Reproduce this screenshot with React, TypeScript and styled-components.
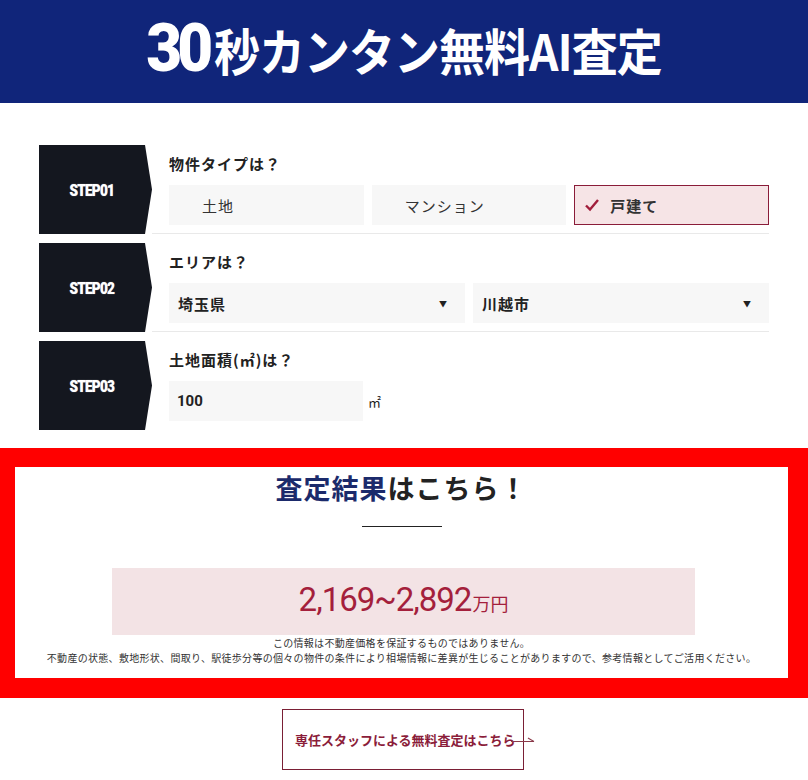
import styled, { createGlobalStyle } from 'styled-components';

const JP = `"Noto Sans CJK JP", "Noto Sans", sans-serif`;

const GlobalStyle = createGlobalStyle`
  body {
    margin: 0;
    background: #fff;
    font-family: ${JP};
    color: #222;
  }
`;

const propertyTypes = ['土地', 'マンション', '戸建て'];

const App = () => (
  <>
    <GlobalStyle />
    <Header>
      <Title>
        <Big>30</Big>秒カンタン無料AI査定
      </Title>
    </Header>

    <Steps>
      <StepRow>
        <StepBadge><StepText>STEP01</StepText></StepBadge>
        <StepBody $divider>
          <Question>物件タイプは？</Question>
          <Choices $cols={3}>
            {propertyTypes.map((t) => (
              <Choice key={t} $active={t === '戸建て'}>
                {t === '戸建て' && <Check />}
                {t}
              </Choice>
            ))}
          </Choices>
        </StepBody>
      </StepRow>

      <StepRow>
        <StepBadge><StepText>STEP02</StepText></StepBadge>
        <StepBody $divider>
          <Question>エリアは？</Question>
          <Choices $cols={2}>
            <Select>埼玉県<Caret>▼</Caret></Select>
            <Select>川越市<Caret>▼</Caret></Select>
          </Choices>
        </StepBody>
      </StepRow>

      <StepRow>
        <StepBadge><StepText>STEP03</StepText></StepBadge>
        <StepBody>
          <Question>土地面積(㎡)は？</Question>
          <InputRow>
            <AreaInput>100</AreaInput>
            <Unit>㎡</Unit>
          </InputRow>
        </StepBody>
      </StepRow>
    </Steps>

    <Result>
      <ResultTitle>
        <Accent>査定結果</Accent>はこちら！
      </ResultTitle>
      <Rule />
      <PriceBox>
        <Price>2,169~2,892</Price>
        <Yen>万円</Yen>
      </PriceBox>
      <Notes>
        この情報は不動産価格を保証するものではありません。
        <br />
        不動産の状態、敷地形状、間取り、駅徒歩分等の個々の物件の条件により相場情報に差異が生じることがありますので、参考情報としてご活用ください。
      </Notes>
    </Result>

    <CtaWrap>
      <Cta>
        専任スタッフによる無料査定はこちら
        <Arrow />
      </Cta>
    </CtaWrap>
  </>
);

const Check = () => (
  <svg width="16" height="14" viewBox="0 0 16 14">
    <path d="M2 7.5 L6 11.5 L14 2" fill="none" stroke="#a11d3b" strokeWidth="2.4" />
  </svg>
);

const Header = styled.header`
  height: 103px;
  background: #10257a;
  display: flex;
  align-items: center;
  justify-content: center;
  padding-bottom: 8px;
  box-sizing: border-box;
`;

const Title = styled.h1`
  margin: 0;
  color: #fff;
  font-family: ${JP};
  font-weight: 700;
  font-size: 46px;
  letter-spacing: -1px;
  line-height: 1;
  display: flex;
  align-items: baseline;
  transform: scaleY(1.08);
`;

const Big = styled.span`
  font-family: Roboto, "Liberation Sans", sans-serif;
  font-weight: 900;
  font-size: 62px;
  letter-spacing: -5px;
  margin-right: 6px;
`;

const Steps = styled.section`
  width: 730px;
  margin: 42px auto 0;
  display: flex;
  flex-direction: column;
  gap: 9px;
`;

const StepRow = styled.div`
  display: flex;
`;

const StepBadge = styled.div`
  width: 113px;
  height: 89px;
  flex-shrink: 0;
  background: #14171f;
  clip-path: polygon(0 0, 106px 0, 100% 50%, 106px 100%, 0 100%);
  display: flex;
  align-items: center;
  justify-content: center;
  padding-right: 8px;
  box-sizing: border-box;
`;

const StepText = styled.span`
  color: #fff;
  font-family: Roboto, "Liberation Sans", sans-serif;
  font-weight: 900;
  font-size: 17px;
  letter-spacing: -1px;
  display: inline-block;
  transform: scaleX(0.8);
  text-shadow: 0 0 1px #bbb;
`;

const StepBody = styled.div<{ $divider?: boolean }>`
  flex: 1;
  height: 89px;
  box-sizing: border-box;
  padding: 8px 0 0 17px;
  border-bottom: 1px solid ${(p) => (p.$divider ? '#e9e9e9' : 'transparent')};
`;

const Question = styled.div`
  font-size: 15px;
  font-weight: 700;
  line-height: 22px;
  letter-spacing: 1px;
  color: #222;
  margin-bottom: 10px;
`;

const Choices = styled.div<{ $cols: number }>`
  display: grid;
  grid-template-columns: repeat(${(p) => p.$cols}, 1fr);
  gap: 8px;
`;

const Choice = styled.div<{ $active?: boolean }>`
  height: 40px;
  box-sizing: border-box;
  display: flex;
  align-items: center;
  gap: 10px;
  padding-left: ${(p) => (p.$active ? '9px' : '32px')};
  font-size: 15px;
  letter-spacing: 1px;
  font-weight: ${(p) => (p.$active ? 700 : 400)};
  color: #333;
  background: ${(p) => (p.$active ? '#f6e4e6' : '#f7f7f7')};
  border: 1px solid ${(p) => (p.$active ? '#8a1c39' : 'transparent')};
`;

const Select = styled.div`
  height: 40px;
  display: flex;
  align-items: center;
  justify-content: space-between;
  padding: 0 17px 0 9px;
  background: #f7f7f7;
  font-size: 15px;
  font-weight: 700;
  letter-spacing: 1px;
  color: #222;
`;

const Caret = styled.span`
  font-size: 8px;
  color: #222;
`;

const InputRow = styled.div`
  display: flex;
  align-items: center;
  gap: 5px;
`;

const AreaInput = styled.div`
  width: 194px;
  height: 40px;
  box-sizing: border-box;
  padding-left: 8px;
  display: flex;
  align-items: center;
  background: #f7f7f7;
  font-family: Roboto, ${JP};
  font-size: 15px;
  font-weight: 700;
  color: #222;
`;

const Unit = styled.span`
  font-size: 13px;
  color: #222;
`;

const Result = styled.section`
  margin-top: 18px;
  border: solid #ff0000;
  border-width: 19px 20px 20px 15px;
  padding: 2px 0 13px;
  display: flex;
  flex-direction: column;
  align-items: center;
`;

const ResultTitle = styled.h2`
  margin: 0;
  font-size: 27px;
  line-height: 38px;
  font-weight: 700;
  letter-spacing: 1px;
  color: #222;
`;

const Accent = styled.span`
  color: #1b2a6b;
`;

const Rule = styled.hr`
  width: 80px;
  margin: 19px 0 0;
  border: 0;
  border-top: 1px solid #222;
`;

const PriceBox = styled.div`
  width: 583px;
  height: 67px;
  margin-top: 41px;
  margin-left: 4px;
  background: #f3e3e5;
  display: flex;
  align-items: baseline;
  justify-content: center;
  padding-top: 12px;
  box-sizing: border-box;
  color: #a41f3c;
`;

const Price = styled.span`
  font-family: Roboto, "Liberation Sans", sans-serif;
  font-size: 33px;
  letter-spacing: -1px;
`;

const Yen = styled.span`
  font-size: 18px;
  margin-left: 1px;
`;

const Notes = styled.p`
  margin: 0;
  font-size: 10px;
  line-height: 15px;
  letter-spacing: 0.3px;
  color: #333;
  text-align: center;
`;

const CtaWrap = styled.div`
  display: flex;
  justify-content: center;
  padding: 11px 0 20px;
`;

const Cta = styled.a`
  position: relative;
  width: 242px;
  height: 61px;
  box-sizing: border-box;
  margin-left: -2px;
  border: 1px solid #7a1f35;
  display: flex;
  align-items: center;
  padding-left: 12px;
  font-size: 13px;
  font-weight: 700;
  color: #8b1d3a;
`;

const Arrow = styled.span`
  position: absolute;
  left: 228px;
  top: 31px;
  width: 23px;
  height: 1px;
  background: #8b3a4a;

  &::after {
    content: '';
    position: absolute;
    right: 0;
    top: 0;
    width: 7px;
    height: 1px;
    background: #8b3a4a;
    transform: rotate(30deg);
    transform-origin: right center;
  }
`;

export default App;
